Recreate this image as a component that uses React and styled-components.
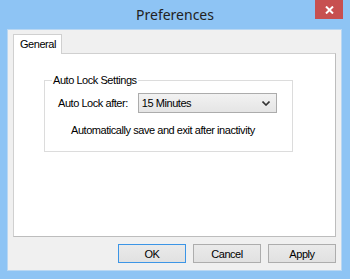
import styled, { createGlobalStyle } from "styled-components";

const GlobalStyle = createGlobalStyle`
  html, body {
    margin: 0;
    padding: 0;
    background: #8ec4f4;
  }
  body {
    font-family: "Liberation Sans", Arial, sans-serif;
  }
`;

const Window = styled.div`
  width: 350px;
  height: 279px;
  display: flex;
  flex-direction: column;
  background: #8ec4f4;
  box-sizing: border-box;
`;

const TitleBar = styled.div`
  height: 29px;
  display: grid;
  grid-template-columns: 1fr auto 1fr;
  align-items: start;
`;

const Title = styled.div`
  grid-column: 2;
  padding-top: 5px;
  font-family: "Noto Sans", "Open Sans", sans-serif;
  font-size: 14px;
  color: #222;
`;

const CloseButton = styled.div`
  grid-column: 3;
  justify-self: end;
  margin-right: 7px;
  width: 28px;
  height: 19px;
  background: #c75050;
  display: flex;
  align-items: center;
  justify-content: center;
`;

const Client = styled.div`
  flex: 1;
  margin: 0 8px 8px 7px;
  background: #f0f0f0;
  border: 1px solid #b9d7f2;
  box-sizing: border-box;
  display: flex;
  flex-direction: column;
  padding: 4px 5px 7px 5px;
  font-size: 11px;
  letter-spacing: -0.45px;
  color: #000;
`;

const Tabs = styled.div`
  display: flex;
  flex-direction: column;
  flex: 1;
`;

const TabStrip = styled.div`
  display: flex;
  height: 19px;
`;

const Tab = styled.div`
  width: 49px;
  box-sizing: border-box;
  height: 20px;
  border: 1px solid #d0d0d0;
  border-bottom: none;
  background: #fff;
  padding: 3px 0 0 6px;
  position: relative;
  z-index: 1;
`;

const Page = styled.div`
  flex: 1;
  background: #fff;
  border: 1px solid #d0d0d0;
  border-right-color: #bdbdbd;
  border-bottom-color: #bdbdbd;
  padding: 20px 0 0 30px;
`;

const Group = styled.fieldset`
  width: 249px;
  height: 78px;
  box-sizing: border-box;
  margin: 0;
  border: 1px solid #dcdcdc;
  padding: 7px 0 0 13px;
`;

const Legend = styled.legend`
  padding: 0 1px;
  margin-left: -6px;
  color: #000;
`;

const FieldRow = styled.div`
  display: flex;
  align-items: center;
  gap: 10px;
`;

const Select = styled.div`
  width: 139px;
  height: 20px;
  box-sizing: border-box;
  border: 1px solid #acacac;
  background: linear-gradient(#f2f2f2, #e5e5e5);
  display: flex;
  align-items: center;
  justify-content: space-between;
  padding: 0 6px 0 3px;
  font-size: 11px;
`;

const Hint = styled.div`
  margin: 11px 0 0 13px;
`;

const ButtonRow = styled.div`
  display: flex;
  justify-content: flex-end;
  gap: 7px;
  padding-top: 7px;
`;

const Button = styled.div`
  width: 68px;
  height: 19px;
  box-sizing: border-box;
  border: 1px solid ${(p) => (p.$default ? "#3c95e6" : "#adadad")};
  background: linear-gradient(#eaeaea, #e1e1e1);
  display: flex;
  align-items: center;
  justify-content: center;
`;

export default function App() {
  return (
    <>
      <GlobalStyle />
      <Window>
        <TitleBar>
          <Title>Preferences</Title>
          <CloseButton>
            <svg width="9" height="8" viewBox="0 0 9 8">
              <path d="M1 0.5 L8 7.5 M8 0.5 L1 7.5" stroke="#fff" strokeWidth="2" />
            </svg>
          </CloseButton>
        </TitleBar>
        <Client>
          <Tabs>
            <TabStrip>
              <Tab>General</Tab>
            </TabStrip>
            <Page>
              <Group>
                <Legend>Auto Lock Settings</Legend>
                <FieldRow>
                  <span>Auto Lock after:</span>
                  <Select>
                    <span>15 Minutes</span>
                    <svg width="8" height="5" viewBox="0 0 8 5">
                      <path d="M0.5 0.5 L4 4 L7.5 0.5" fill="none" stroke="#333" strokeWidth="1.6" />
                    </svg>
                  </Select>
                </FieldRow>
                <Hint>Automatically save and exit after inactivity</Hint>
              </Group>
            </Page>
          </Tabs>
          <ButtonRow>
            <Button $default>OK</Button>
            <Button>Cancel</Button>
            <Button>Apply</Button>
          </ButtonRow>
        </Client>
      </Window>
    </>
  );
}
